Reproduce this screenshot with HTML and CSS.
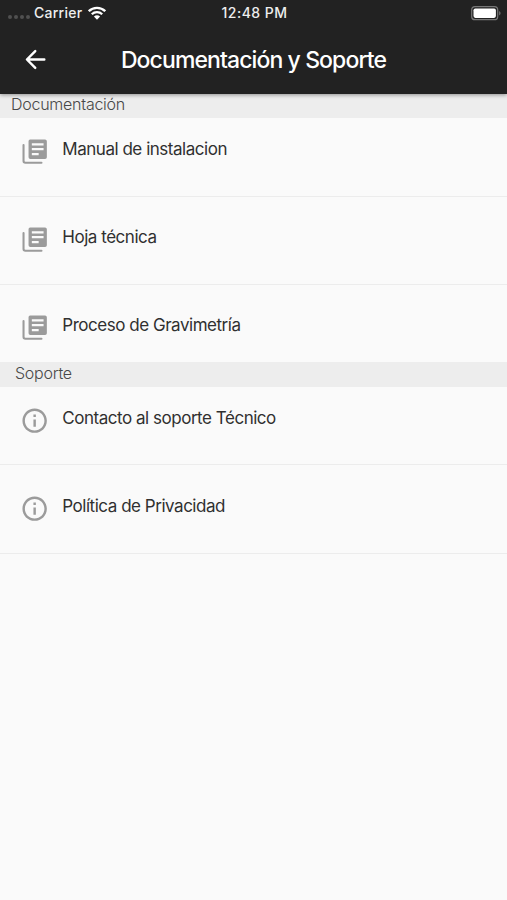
FILE: index.html
```html
<!DOCTYPE html>
<html lang="es">
<head>
<meta charset="utf-8">
<title>Documentación y Soporte</title>
<link rel="stylesheet" href="styles.css">
</head>
<body>
<svg class="defs" aria-hidden="true">
  <symbol id="library" viewBox="0 0 24 24">
    <path d="M2.900 6.500v13.200c0 .9.600 1.400 1.500 1.400h13.200" fill="none" stroke="currentColor" stroke-width="1.700" stroke-linecap="round"/>
    <path fill="currentColor" fill-rule="evenodd" d="M8.300 2h12.200A1.500 1.500 0 0 1 22 3.500v13a1.500 1.500 0 0 1-1.500 1.500h-12A1.500 1.500 0 0 1 7 16.500v-13A1.500 1.500 0 0 1 8.300 2zM9.700 5.100v1.800h9.600V5.100zM9.700 9.100v1.800h9.600V9.100zM9.700 13.100v1.800h5.600v-1.800z"/>
  </symbol>
  <symbol id="info" viewBox="0 0 24 24">
    <path fill="currentColor" d="M11 7h2v2h-2zm0 4h2v6h-2zm1-9C6.480 2 2 6.480 2 12s4.480 10 10 10 10-4.480 10-10S17.520 2 12 2zm0 18c-4.410 0-8-3.590-8-8s3.590-8 8-8 8 3.590 8 8-3.590 8-8 8z"/>
  </symbol>
</svg>
<header class="header">
  <div class="status">
    <div class="carrier">
      <span class="dots"><i></i><i></i><i></i><i></i></span>
      <span class="carrier-name">Carrier</span>
      <svg class="wifi" viewBox="0 0 18 14"><g fill="none" stroke="#fff" stroke-width="2.300"><path d="M.8 5.200a11.700 11.700 0 0 1 16.400 0"/><path d="M3.800 8.300a7.400 7.400 0 0 1 10.400 0"/></g><path d="M9 13.800 5.900 10.600a4.500 4.500 0 0 1 6.200 0z" fill="#fff"/></svg>
    </div>
    <span class="time">12:48 PM</span>
    <svg class="battery" viewBox="0 0 30 15"><rect x=".7" y=".7" width="26" height="13" rx="3.300" fill="none" stroke="#777" stroke-width="1.200"/><rect x="2.500" y="2.500" width="22.400" height="9.400" rx="1.800" fill="#fff"/><path d="M28.200 5v4.500c1.800-.8 1.800-3.700 0-4.500z" fill="#777"/></svg>
  </div>
  <div class="bar">
    <svg class="back" viewBox="0 0 24 24"><path fill="none" stroke="#fff" stroke-width="2" stroke-linecap="round" stroke-linejoin="round" d="M19.300 12H5M11.800 5 4.900 12l6.900 7"/></svg>
    <h1 class="title">Documentación y Soporte</h1>
  </div>
</header>
<main>
  <h2 class="section">Documentación</h2>
  <ul class="list">
    <li class="row"><svg class="icon"><use href="#library"/></svg><span>Manual de instalacion</span></li>
    <li class="row"><svg class="icon"><use href="#library"/></svg><span>Hoja técnica</span></li>
    <li class="row"><svg class="icon"><use href="#library"/></svg><span>Proceso de Gravimetría</span></li>
  </ul>
  <h2 class="section support">Soporte</h2>
  <ul class="list">
    <li class="row"><svg class="icon"><use href="#info"/></svg><span>Contacto al soporte Técnico</span></li>
    <li class="row"><svg class="icon"><use href="#info"/></svg><span>Política de Privacidad</span></li>
  </ul>
</main>
</body>
</html>
```
FILE: styles.css
```css
* { box-sizing: border-box; }
body {
  margin: 0;
  min-height: 900px;
  background: #fafafa;
  color: #303030;
  font-family: Inter, "Liberation Sans", sans-serif;
}
.defs { display: none; }
.header {
  position: relative;
  height: 94px;
  background: #222;
  color: #fff;
  box-shadow: 0 1px 4px rgba(0, 0, 0, .4);
}
.status {
  display: grid;
  grid-template-columns: 1fr auto 1fr;
  align-items: center;
  height: 26px;
  padding: 0 6px 0 8px;
  font-size: 14px;
  line-height: 16px;
  font-weight: 500;
  color: #eee;
}
.carrier { display: flex; align-items: center; }
.dots { display: flex; gap: 2px; width: 26px; padding-top: 8px; }
.dots i { width: 4px; height: 4px; border-radius: 50%; background: #505050; }
.carrier-name { letter-spacing: .25px; width: 54px; }
.wifi { width: 18px; height: 14px; }
.time { letter-spacing: .45px; }
.battery { justify-self: end; width: 30px; height: 15px; }
.bar {
  display: grid;
  grid-template-columns: 60px 1fr 60px;
  align-items: center;
  height: 67px;
}
.back { width: 29px; height: 29px; margin-left: 21px; }
.title {
  margin: 0;
  padding-top: 1px;
  text-align: center;
  white-space: nowrap;
  font-size: 23px;
  font-weight: 500;
  letter-spacing: -.9px;
}
.section {
  height: 24px;
  margin: 0;
  padding: 0 11px;
  background: #ededed;
  color: #484848;
  font-size: 16px;
  font-weight: 300;
  line-height: 21px;
  letter-spacing: -.25px;
}
.support { height: 25px; padding-left: 15px; line-height: 23px; }
.list { margin: 0; padding: 0; list-style: none; }
.row {
  display: flex;
  height: 88px;
  padding: 28px 20px 0 20.400px;
  gap: 12.600px;
  border-bottom: 1px solid #ececec;
  font-size: 17px;
  line-height: 24px;
  letter-spacing: -.47px;
}
.row:first-child { height: 79px; padding-top: 19px; }
.support + .list .row:first-child { height: 78px; }
.support + .list .row:last-child { height: 89px; padding-top: 29px; }
.row:nth-child(3) { height: 77px; border-bottom: 0; }
.icon { width: 29.300px; height: 29.300px; color: #9b9b9b; }
```
